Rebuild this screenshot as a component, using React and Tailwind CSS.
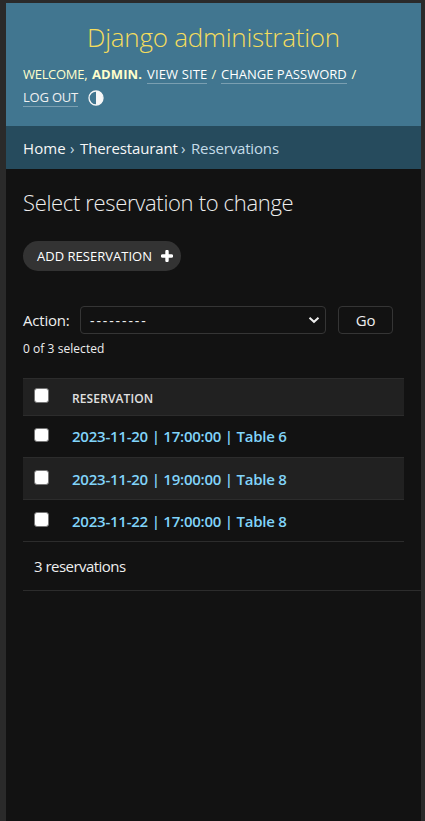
const rows = [
  { label: '2023-11-20 | 17:00:00 | Table 6', style: 'h-[42px] bg-[#121212]', box: 'h-[14px] mt-[-4px]' },
  { label: '2023-11-20 | 19:00:00 | Table 8', style: 'h-[42px] bg-[#212121] pt-[2px]', box: 'h-[15px] mt-[-4px]' },
  { label: '2023-11-22 | 17:00:00 | Table 8', style: 'h-[42px] bg-[#121212] pt-[2px]', box: 'h-[15px] mt-[-4px]' },
];

function Checkbox({ className }) {
  return <span className={`w-[15px] shrink-0 rounded-[3px] border border-[#767676] bg-white ${className}`} />;
}

function Header() {
  return (
    <header className="h-[123px] bg-[#417690] px-[17px] pt-[16px]">
      <h1 className="h-9 text-center text-[26px] leading-9 font-light tracking-[-0.25px] whitespace-nowrap text-[#f5dd5d]">
        Django administration
      </h1>
      <div className="mt-[8px] flex h-[23px] items-start text-[13px] leading-[23px] whitespace-nowrap text-[#ffc]">
        <span className="w-[69px] tracking-[-0.3px]">WELCOME,</span>
        <span className="w-[55px] font-bold tracking-[0.1px]">ADMIN.</span>
        <a className="mt-[3px] h-[18px] w-[60px] border-b border-[#7a9fb1] leading-[17px] tracking-[0.15px] text-white">VIEW SITE</a>
        <span className="w-[14px] text-center">/</span>
        <a className="mt-[3px] h-[18px] w-[126px] border-b border-[#7a9fb1] leading-[17px] text-white">CHANGE PASSWORD</a>
        <span className="w-[14px] text-center">/</span>
      </div>
      <div className="flex h-[23px] items-start text-[13px] whitespace-nowrap">
        <a className="mt-[2px] h-[19px] w-[55px] border-b border-[#7a9fb1] leading-[19px] tracking-[-0.2px] text-[#f0f0f0]">LOG OUT</a>
        <svg className="mt-1 ml-[10px] h-4 w-4" viewBox="0 0 16 16">
          <circle cx="8" cy="8" r="7" fill="none" stroke="#f7f7f7" strokeWidth="1.3" />
          <path d="M8 1a7 7 0 0 1 0 14z" fill="#f7f7f7" />
        </svg>
      </div>
    </header>
  );
}

export default function App() {
  return (
    <div className="h-[821px] w-[425px] overflow-hidden bg-[#2a2a2a] pt-[3px] pr-[4px] pl-[6px] font-['Open_Sans','Noto_Sans',sans-serif] text-[#eee]">
      <div className="h-[818px] bg-[#121212]">
        <Header />
        <nav className="flex h-[43px] items-center bg-[#264b5d] px-[17px] pt-px text-[15px] whitespace-nowrap text-[#f7f7f7]">
          <span className="w-[47px] tracking-[0.1px]">Home</span>
          <span className="w-[10px] text-[#c4dce8]">›</span>
          <span className="w-[101px] tracking-[-0.13px]">Therestaurant</span>
          <span className="w-[10px] text-[#c4dce8]">›</span>
          <span className="tracking-[-0.15px] text-[#c4dce8]">Reservations</span>
        </nav>
        <main className="pl-[17px]">
          <h2 className="mt-[18px] h-[31px] text-[22px] leading-[30px] font-light tracking-[-0.33px] whitespace-nowrap">
            Select reservation to change
          </h2>
          <a className="mt-[23px] flex h-[30px] w-[158px] items-center rounded-full bg-[#333] pl-[14px] text-[13px] whitespace-nowrap text-white">
            <span className="w-[124px] pt-px tracking-[0.02px]">ADD RESERVATION</span>
            <svg className="h-3 w-3" viewBox="0 0 12 12">
              <path d="M6 1.5v9M1.5 6h9" stroke="#fff" strokeWidth="3.4" strokeLinecap="round" />
            </svg>
          </a>
          <div className="mt-[35px] flex h-7 items-center text-[14px] whitespace-nowrap">
            <span className="w-[57px] text-[15px] tracking-[-0.2px]">Action:</span>
            <div className="flex h-7 w-[246px] items-center justify-between rounded-[4px] border border-[#353535] pr-[5px] pl-[9px]">
              <span className="tracking-[1.9px]">---------</span>
              <svg className="h-3 w-3" viewBox="0 0 12 12">
                <path d="M1.5 3.8 6 7.8l4.500-4" fill="none" stroke="#eee" strokeWidth="2" />
              </svg>
            </div>
            <button className="ml-3 h-7 w-[55px] rounded-[4px] border border-[#353535] text-[15px] tracking-[-0.3px]">Go</button>
          </div>
          <p className="mt-[5px] h-5 text-[12px] leading-5 tracking-[0.05px] whitespace-nowrap">0 of 3 selected</p>
          <div className="mt-[19px] w-[381px] whitespace-nowrap">
            <div className="flex h-[38px] items-center border-y border-[#2c2c2c] bg-[#212121] pl-[11px]">
              <Checkbox className="mt-[-4px] h-[15px]" />
              <span className="ml-[23px] pt-[3px] text-[12px] font-semibold tracking-[0.12px] text-[#e0e0e0]">RESERVATION</span>
            </div>
            {rows.map((row) => (
              <div key={row.label} className={`flex items-center border-b border-[#2c2c2c] pl-[11px] ${row.style}`}>
                <Checkbox className={row.box} />
                <a className="ml-[23px] text-[15px] font-semibold tracking-[-0.23px] text-[#81d4fa]">{row.label}</a>
              </div>
            ))}
          </div>
          <p className="flex h-[49px] items-center border-b border-[#2c2c2c] pl-[11px] text-[15px] tracking-[-0.53px]">3 reservations</p>
        </main>
      </div>
    </div>
  );
}
